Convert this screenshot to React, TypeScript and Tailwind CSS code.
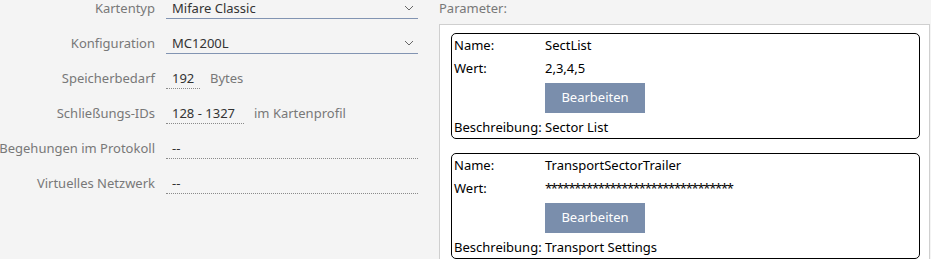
import React from "react";

const font = { fontFamily: '"Segoe UI", "Noto Sans", "Open Sans", sans-serif' };

const Chevron = () => (
  <svg width="10" height="6" viewBox="0 0 10 6" className="text-[#666]">
    <polyline points="1,1 5,5 9,1" fill="none" stroke="currentColor" strokeWidth="1" />
  </svg>
);

type Row = {
  label: string;
  value: string;
  kind: "select" | "text" | "wide";
  suffix?: string;
  width?: string;
};

const rows: Row[] = [
  { label: "Kartentyp", value: "Mifare Classic", kind: "select" },
  { label: "Konfiguration", value: "MC1200L", kind: "select" },
  { label: "Speicherbedarf", value: "192", kind: "text", suffix: "Bytes", width: "w-[34px]" },
  { label: "Schließungs-IDs", value: "128 - 1327", kind: "text", suffix: "im Kartenprofil", width: "w-[78px]" },
  { label: "Begehungen im Protokoll", value: "--", kind: "wide" },
  { label: "Virtuelles Netzwerk", value: "--", kind: "wide" },
];

const FieldRow = ({ row }: { row: Row }) => (
  <div className="flex h-[35px] items-start">
    <div className="flex w-[155px] shrink-0 justify-end whitespace-nowrap text-[13px] leading-[20px] text-[#787878]">
      {row.label}
    </div>
    <div className="ml-[11px] flex w-[252px] items-start">
      {row.kind === "select" && (
        <div className="flex h-[21px] w-full items-center justify-between border-b border-[#8294b2] pl-[6px] pr-[4px] pb-[1px]">
          <span className="text-[13px] leading-[20px] text-[#333]">{row.value}</span>
          <Chevron />
        </div>
      )}
      {row.kind === "text" && (
        <>
          <div className={`${row.width} h-[21px] whitespace-nowrap border-b border-dotted border-[#8a8a8a] pl-[6px] text-[13px] leading-[20px] text-[#333]`}>
            {row.value}
          </div>
          <span className="ml-[10px] text-[13px] leading-[20px] text-[#787878]">{row.suffix}</span>
        </>
      )}
      {row.kind === "wide" && (
        <div className="h-[21px] w-full border-b border-dotted border-[#8a8a8a] pl-[6px] text-[13px] leading-[20px] text-[#333]">
          {row.value}
        </div>
      )}
    </div>
  </div>
);

const params = [
  { name: "SectList", value: "2,3,4,5", desc: "Sector List", masked: false },
  { name: "TransportSectorTrailer", value: "********************************", desc: "Transport Settings", masked: true },
];

const ParamCard = ({ p }: { p: (typeof params)[number] }) => (
  <div className="rounded-[5px] border border-black px-[2px] text-[13px] text-black">
    <div className="flex leading-[23px]">
      <span className="w-[91px] shrink-0">Name:</span>
      <span>{p.name}</span>
    </div>
    <div className="flex leading-[23px]">
      <span className="w-[91px] shrink-0">Wert:</span>
      <span className={p.masked ? "tracking-[-1.3px]" : ""}>{p.value}</span>
    </div>
    <div className="mt-[3px] pl-[91px]">
      <button className="h-[30px] w-[100px] bg-[#7a8eac] text-[13px] text-white">Bearbeiten</button>
    </div>
    <div className="flex pt-[3px] leading-[22px]">
      <span className="w-[91px] shrink-0 whitespace-nowrap">Beschreibung:</span>
      <span>{p.desc}</span>
    </div>
  </div>
);

export default function App() {
  return (
    <div style={font} className="flex h-[259px] w-[931px] overflow-hidden bg-[#f4f4f4]">
      <div className="-mt-[2px] w-[439px] shrink-0">
        {rows.map((r) => (
          <FieldRow key={r.label} row={r} />
        ))}
      </div>
      <div className="-mt-[2px] flex-1 pr-[1px]">
        <div className="mb-[6px] text-[13px] leading-[20px] text-[#787878]">Parameter:</div>
        <div className="flex flex-col gap-[14px] border border-[#cfcfcf] bg-white pt-[8px] pl-[11px] pr-[9px]">
          {params.map((p) => (
            <ParamCard key={p.name} p={p} />
          ))}
        </div>
      </div>
    </div>
  );
}
